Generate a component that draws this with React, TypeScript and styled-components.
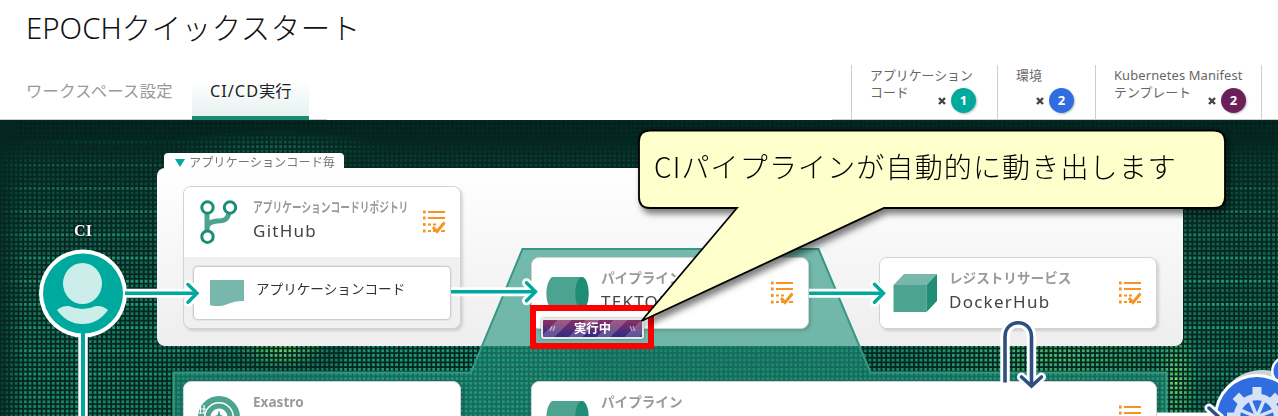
import React from 'react';
import styled, { createGlobalStyle } from 'styled-components';

const Global = createGlobalStyle`
  * { box-sizing: border-box; }
  body {
    margin: 0;
    width: 1278px;
    height: 416px;
    overflow: hidden;
    background: #fff;
    font-family: 'Noto Sans', 'Noto Sans CJK JP', sans-serif;
  }
`;

const Page = styled.div`
  width: 1278px;
  height: 416px;
  display: flex;
  flex-direction: column;
  overflow: hidden;
`;

const Title = styled.h1`
  margin: 0;
  padding: 7px 0 0 26px;
  height: 65px;
  font-size: 29.4px;
  line-height: 42px;
  font-weight: 300;
  color: #111;
  white-space: nowrap;
`;

const Bar = styled.div`
  height: 55px;
  display: flex;
  justify-content: space-between;
  background: linear-gradient(#ccc, #ccc) 0 54px / 327px 1px no-repeat,
    linear-gradient(#ccc, #ccc) 832px 54px / 446px 1px no-repeat;
`;

const Tabs = styled.nav`
  display: flex;
  padding: 16px 0 0 8px;
`;

const Tab = styled.div<{ $active?: boolean }>`
  height: 39px;
  width: ${(p) => (p.$active ? '117px' : '184px')};
  padding-left: 18px;
  line-height: 20px;
  font-size: 16.3px;
  white-space: nowrap;
  color: ${(p) => (p.$active ? '#222' : '#999')};
  border-bottom: ${(p) => (p.$active ? '4px solid #1b8a74' : '0')};
  background: ${(p) => (p.$active ? 'linear-gradient(#ffffff, #e6f2f0)' : 'none')};
`;

const Spread = styled.span<{ $s: number }>`
  letter-spacing: ${(p) => p.$s}px;
`;

const Counters = styled.div`
  display: flex;
  margin-right: 16px;
  border-right: 1px solid #ccc;
`;

const Counter = styled.div<{ $w: number; $pad: number }>`
  width: ${(p) => p.$w}px;
  padding: 2px ${(p) => p.$pad}px 0 18px;
  border-left: 1px solid #ccc;
  font-size: 12.9px;
  line-height: 17px;
  color: #666;
  white-space: nowrap;
`;

const CountRow = styled.div`
  display: flex;
  justify-content: flex-end;
  align-items: center;
  gap: 5px;
  height: 25px;
  margin-top: -13px;
`;

const Times = styled.svg`
  width: 8px;
  height: 8px;
`;

const Badge = styled.span<{ $c: string }>`
  width: 25px;
  height: 25px;
  border-radius: 50%;
  background: ${(p) => p.$c};
  box-shadow: 1px 1px 2px rgba(0, 0, 0, 0.25);
  color: #fff;
  font-size: 13px;
  font-weight: 700;
  line-height: 25px;
  text-align: center;
`;

const Canvas = styled.main`
  position: relative;
  flex: 1;
  overflow: hidden;
  background: #052822;
`;

const Layer = styled.svg`
  position: absolute;
  left: 0;
  top: 0;
`;

const GroupPanel = styled.section`
  position: absolute;
  left: 157px;
  top: 48px;
  width: 1026px;
  height: 178px;
  border-radius: 8px;
  background: linear-gradient(#fff, #f7f7f7 45%, #eee);
`;

const GroupLabel = styled.div`
  position: absolute;
  left: 164px;
  top: 33px;
  width: 180px;
  height: 20px;
  padding-left: 11px;
  display: flex;
  align-items: center;
  gap: 4px;
  border-radius: 4px 4px 0 0;
  background: #fff;
  color: #777;
  font-size: 12.2px;
  white-space: nowrap;
  line-height: 20px;
`;

const Card = styled.article<{ $x: number; $y: number; $w: number; $h: number }>`
  position: absolute;
  left: ${(p) => p.$x}px;
  top: ${(p) => p.$y}px;
  width: ${(p) => p.$w}px;
  height: ${(p) => p.$h}px;
  border: 1px solid #d2d2d2;
  border-radius: 8px;
  background: #f0f0f0;
  box-shadow: 2px 2px 3px rgba(0, 0, 0, 0.14);
  overflow: hidden;
`;

const CardHead = styled.header`
  height: 70px;
  padding: 0 14px 0 13px;
  display: flex;
  align-items: center;
  background: #fff;
`;

const IconBox = styled.div`
  width: 56px;
  height: 70px;
  flex: none;
`;

const CardText = styled.div`
  flex: 1;
  min-width: 0;
  height: 70px;
  padding-top: 9px;
  white-space: nowrap;
`;

const Kind = styled.div<{ $scale?: number }>`
  height: 22px;
  line-height: 22px;
  font-size: 13.6px;
  font-weight: 700;
  color: #9a9a9a;
  transform: scaleX(${(p) => p.$scale ?? 1});
  transform-origin: 0 0;
`;

const Name = styled.div`
  height: 24px;
  line-height: 25px;
  font-size: 17px;
  letter-spacing: 1.25px;
  color: #444;
`;

const CodeItem = styled.div`
  height: 54px;
  margin: 9px;
  padding-left: 16px;
  display: flex;
  align-items: center;
  gap: 12px;
  border: 1px solid #ccc;
  border-radius: 5px;
  background: #fff;
  box-shadow: 0 0 0 1px #e4e4e4;
  color: #333;
  font-size: 13.6px;
  line-height: 20px;
  white-space: nowrap;
`;

const CodeName = styled.span`
  padding-bottom: 8px;
`;

const UserLabel = styled.div`
  position: absolute;
  left: 53px;
  top: 101px;
  width: 60px;
  text-align: center;
  font: 700 16px/20px 'Liberation Serif', serif;
  color: #fff;
  text-shadow: 0 0 2px #000, 0 0 2px #000;
`;

const RunMark = styled.div`
  position: absolute;
  left: 530px;
  top: 185px;
  width: 124px;
  height: 44px;
  border: 6px solid #f00;
  padding: 7px 0 0 5px;
`;

const RunBadge = styled.div`
  width: 103px;
  height: 21px;
  border: 2px solid #e8e8e8;
  border-radius: 3px;
  box-shadow: 0 0 2px rgba(0, 0, 0, 0.5);
  background: repeating-linear-gradient(135deg, transparent 0 10px, rgba(255, 255, 255, 0.2) 10px 20px),
    linear-gradient(#8a2f63, #302a86);
  display: flex;
  align-items: center;
  justify-content: space-between;
  padding: 0 5px;
  color: #fff;
  font-size: 12.3px;
  font-weight: 700;
  line-height: 17px;
`;

const Tick = styled.svg`
  width: 9px;
  height: 5px;
  opacity: 0.55;
`;

const CalloutText = styled.p`
  position: absolute;
  left: 654px;
  top: 26px;
  margin: 0;
  font-size: 28px;
  line-height: 40px;
  font-weight: 300;
  letter-spacing: 1.15px;
  color: #000;
  white-space: nowrap;
  font-family: 'Noto Sans CJK JP', sans-serif;
`;

const ChecklistIcon = () => (
  <svg width="24" height="26" viewBox="0 0 24 26" fill="none" stroke="#f7931e" strokeWidth="1.8">
    <path d="M6 3H23M6 9H23M6 15.5H9M11 15.5H14M6 22H9M11 22H13M19 22H23" />
    <path d="M1 3H3.6M1 9H3.6M1 15.5H3.6M1 22H3.6" strokeWidth="2.8" />
    <path d="M11 18L15 22.5L22.5 13.5" strokeWidth="3" />
  </svg>
);

const BranchIcon = () => (
  <svg width="56" height="70" viewBox="0 0 56 70" fill="none">
    <path d="M10 20V50M32.5 20C32.5 34 26 34 20 34C14 35 10 36 10 42" stroke="#4ba390" strokeWidth="5" />
    <g fill="#fff" stroke="#1f8c76" strokeWidth="3">
      <circle cx="10.5" cy="20.5" r="5.7" />
      <circle cx="33" cy="20.5" r="5.7" />
      <circle cx="10.5" cy="49.7" r="5.7" />
    </g>
  </svg>
);

const CylinderIcon = () => (
  <svg width="56" height="70" viewBox="0 0 56 70">
    <path d="M7 19H37.5V52H7C-0.5 46 -0.5 25 7 19Z" fill="#4ba390" />
    <ellipse cx="37" cy="35.5" rx="6.8" ry="16.5" fill="#1f8c76" />
  </svg>
);

const CubeIcon = () => (
  <svg width="56" height="70" viewBox="0 0 56 70">
    <path d="M0.5 27L11 16H44L33.5 27Z" fill="#78b8ac" />
    <path d="M0.5 27H33.5V54H0.5Z" fill="#4ba390" />
    <path d="M33.5 27L44 16V43L33.5 54Z" fill="#1f8c76" />
  </svg>
);

const ExastroIcon = () => (
  <svg width="56" height="70" viewBox="0 0 56 70" fill="none">
    <circle cx="22" cy="35" r="18" stroke="#4ba390" strokeWidth="6" />
    <circle cx="22" cy="35" r="11" stroke="#4ba390" strokeWidth="5" />
    <path d="M22 28L23.5 33L27.5 34.5L22 38L16.5 34.5L20.5 33Z" fill="#4ba390" />
    <path d="M0 27H9M3.5 23V32M7 23V32M0 31H9" stroke="#fff" strokeWidth="1.2" />
  </svg>
);

const DocIcon = () => (
  <svg width="34" height="28" viewBox="0 0 34 28">
    <path d="M0 1H34V22C22 21 16 28 5 27Q2 27 0 26Z" fill="#78b8ac" />
  </svg>
);

type HeadProps = { icon: React.ReactNode; kind: string; name?: string; scale?: number };

const Head = ({ icon, kind, name, scale }: HeadProps) => (
  <CardHead>
    <IconBox>{icon}</IconBox>
    <CardText>
      <Kind $scale={scale}>{kind}</Kind>
      {name && <Name>{name}</Name>}
    </CardText>
    {kind !== 'Exastro' && <ChecklistIcon />}
  </CardHead>
);

type CountProps = { w: number; pad: number; color: string; n: number; lines: [React.ReactNode, string] };

const CountItem = ({ w, pad, color, n, lines }: CountProps) => (
  <Counter $w={w} $pad={pad}>
    <div>{lines[0]}</div>
    <div>{lines[1] || '\u00a0'}</div>
    <CountRow>
      <Times viewBox="0 0 8 8">
        <path d="M1 1L7 7M7 1L1 7" stroke="#444" strokeWidth="2.4" />
      </Times>
      <Badge $c={color}>{n}</Badge>
    </CountRow>
  </Counter>
);

const Dots = () => (
  <Layer width="1278" height="296" viewBox="0 0 1278 296">
    <defs>
      <pattern id="cell" width="4.64" height="4.64" patternUnits="userSpaceOnUse" x="0.8" y="2.04">
        <rect width="2.8" height="2.8" fill="#fff" />
      </pattern>
      <pattern id="rows" width="4.64" height="23.2" patternUnits="userSpaceOnUse" x="0.8" y="20.6">
        <rect width="2.8" height="2.8" fill="#fff" />
      </pattern>
      <mask id="cells">
        <rect width="1278" height="296" fill="url(#cell)" />
      </mask>
      <mask id="lines">
        <rect width="1278" height="296" fill="url(#rows)" />
      </mask>
      <radialGradient id="glow">
        <stop offset="0" stopColor="#1f9f7c" />
        <stop offset="0.5" stopColor="#1f9f7c" stopOpacity="0.5" />
        <stop offset="1" stopColor="#1f9f7c" stopOpacity="0" />
      </radialGradient>
      <radialGradient id="lime">
        <stop offset="0" stopColor="#7ee068" />
        <stop offset="1" stopColor="#3fc85a" stopOpacity="0" />
      </radialGradient>
      <linearGradient id="fade" x2="0" y2="1">
        <stop offset="0" stopColor="#021d18" />
        <stop offset="0.07" stopColor="#04241e" />
        <stop offset="0.12" stopColor="#0a3a30" />
        <stop offset="0.4" stopColor="#15604e" />
        <stop offset="1" stopColor="#187860" />
      </linearGradient>
      <linearGradient id="edge">
        <stop offset="0" stopColor="#052822" stopOpacity="0.8" />
        <stop offset="1" stopColor="#052822" stopOpacity="0" />
      </linearGradient>
    </defs>
    <g mask="url(#cells)">
      <rect width="1278" height="296" fill="url(#fade)" />
      <ellipse cx="100" cy="270" rx="180" ry="150" fill="url(#glow)" opacity="0.5" />
      <ellipse cx="275" cy="26" rx="110" ry="16" fill="url(#glow)" opacity="0.5" />
      <ellipse cx="460" cy="250" rx="120" ry="50" fill="#21c795" opacity="0.35" />
      <ellipse cx="460" cy="250" rx="150" ry="60" fill="url(#glow)" />
      <ellipse cx="1000" cy="240" rx="300" ry="80" fill="url(#glow)" opacity="0.7" />
      <ellipse cx="282" cy="230" rx="46" ry="20" fill="url(#lime)" />
      <ellipse cx="1060" cy="236" rx="150" ry="34" fill="url(#lime)" opacity="0.6" />
      <ellipse cx="1176" cy="260" rx="24" ry="60" fill="url(#lime)" />
    </g>
    <g mask="url(#lines)">
      <ellipse cx="110" cy="180" rx="200" ry="190" fill="url(#glow)" />
      <ellipse cx="1230" cy="190" rx="130" ry="170" fill="url(#glow)" />
    </g>
    <rect width="24" height="296" fill="url(#edge)" />
  </Layer>
);

const Zones = () => (
  <Layer width="1278" height="296" viewBox="0 0 1278 296">
    <path
      d="M173.5 300V252.5H471L522.5 129H818.5L870.5 252.5H1166.5V300"
      fill="rgba(34,148,126,0.62)"
      stroke="#369783"
      strokeWidth="2"
    />
  </Layer>
);

const Connectors = () => (
  <Layer width="1278" height="296" viewBox="0 0 1278 296" fill="none">
    <path d="M125 173.3H192M451 171.8H532M809 173.3H880" stroke="#fff" strokeWidth="9" />
    <path
      d="M188.5 164.5L197 173.3L188.5 182.3M526.5 162.8L535.5 171.8L526.5 180.8M874.5 164.3L883.5 173.3L874.5 182.3"
      stroke="#fff"
      strokeWidth="9"
      strokeLinecap="round"
      strokeLinejoin="round"
    />
    <path d="M83 214V296" stroke="#fff" strokeWidth="9.5" />
    <circle cx="83" cy="173.5" r="44" fill="#fff" />
    <circle cx="83" cy="173.5" r="40" fill="#00a99d" />
    <ellipse cx="82.5" cy="163.5" rx="19.5" ry="20.5" fill="#cceeeb" />
    <path d="M57 190Q62 185.5 69 186Q82.5 192 96 186Q103 185.5 108 190Q98 204 82.5 204Q67 204 57 190Z" fill="#cceeeb" />
    <g stroke="#00a99d" strokeWidth="3.4">
      <path d="M125 173.3H196M451 171.8H534M809 173.3H882" />
      <path
        d="M188 164.5L197 173.3L188 182.3M526.5 162.8L535.5 171.8L526.5 180.8M874.5 164.3L883.5 173.3L874.5 182.3"
        strokeLinecap="round"
      />
      <path d="M83 206V296" strokeWidth="4" />
    </g>
    <path d="M1005 262.5V217C1005 198 1031.5 198 1031.5 217V264" stroke="#fff" strokeWidth="9.5" />
    <path d="M1021.5 257L1031.5 266L1041.5 257" stroke="#fff" strokeWidth="9" strokeLinecap="round" />
    <path d="M1005 262.5V217C1005 198 1031.5 198 1031.5 217V264" stroke="#2f4f80" strokeWidth="3.6" />
    <path d="M1021.5 257L1031.5 266L1041.5 257" stroke="#2f4f80" strokeWidth="3.6" strokeLinecap="round" />

    <circle cx="1262" cy="296" r="46" fill="#c9d6d1" />
    <circle cx="1286" cy="251" r="15" fill="#fff" />
    <circle cx="1286" cy="251" r="12.5" fill="#2f6de0" />
    <circle cx="1257" cy="297" r="43" fill="#fff" />
    <circle cx="1257" cy="297" r="40" fill="#2f6de0" />
    <g stroke="#d5e2f8" transform="translate(1257 297)">
      <circle r="20" strokeWidth="6.5" />
      {[0, 1, 2, 3, 4, 5, 6, 7].map((i) => (
        <path key={i} d="M0 -30V-22" strokeWidth="9" transform={`rotate(${i * 45})`} />
      ))}
      {[0, 1, 2, 3, 4, 5, 6, 7].map((i) => (
        <path key={i} d="M0 -20V0" strokeWidth="3.5" transform={`rotate(${i * 45 + 22.5})`} />
      ))}
    </g>
    <path d="M1157 297H1212" stroke="#fff" strokeWidth="9" />
    <path d="M1209 288L1220 298" stroke="#fff" strokeWidth="9" strokeLinecap="round" />
    <path d="M1209 288L1220 298" stroke="#2f4f80" strokeWidth="3.5" strokeLinecap="round" />
  </Layer>
);

const CalloutShape = () => (
  <Layer width="1278" height="296" viewBox="0 0 1278 296">
    <defs>
      <filter id="drop" x="-5%" y="-10%" width="115%" height="130%">
        <feDropShadow dx="3" dy="5" stdDeviation="3" floodOpacity="0.5" />
      </filter>
    </defs>
    <path
      d="M649 10.5H1214Q1225 10.5 1225 21.5V77Q1225 88 1214 88H884L641.5 201L737 88H650Q639 88 639 77V21.5Q639 10.5 650 10.5Z"
      fill="#ffffcc"
      stroke="#000"
      strokeWidth="1.8"
      filter="url(#drop)"
    />
  </Layer>
);

export default function App() {
  return (
    <Page>
      <Global />
      <Title>
        EPOCH<Spread $s={0.6}>クイックスタート</Spread>
      </Title>
      <Bar>
        <Tabs>
          <Tab>
            <Spread $s={0.3}>ワークスペース設定</Spread>
          </Tab>
          <Tab $active>
            <Spread $s={1}>CI/CD</Spread>実行
          </Tab>
        </Tabs>
        <Counters>
          <CountItem w={146} pad={21} color="#00a99d" n={1} lines={['アプリケーション', 'コード']} />
          <CountItem w={98} pad={21} color="#2f6de0" n={2} lines={['環境', '']} />
          <CountItem
            w={166}
            pad={15}
            color="#6b2058"
            n={2}
            lines={[
              <Spread key="k" $s={0.14}>
                Kubernetes Manifest
              </Spread>,
              'テンプレート',
            ]}
          />
        </Counters>
      </Bar>
      <Canvas>
        <Dots />
        <GroupPanel />
        <GroupLabel>
          <svg width="10" height="8" viewBox="0 0 10 8">
            <path d="M0 0H10L5 8Z" fill="#00a99d" />
          </svg>
          アプリケーションコード毎
        </GroupLabel>
        <Zones />
        <Card $x={183} $y={66} $w={278} $h={143}>
          <Head icon={<BranchIcon />} kind="アプリケーションコードリポジトリ" name="GitHub" scale={0.715} />
          <CodeItem>
            <DocIcon />
            <CodeName>アプリケーションコード</CodeName>
          </CodeItem>
        </Card>
        <Card $x={531} $y={137} $w={278} $h={72}>
          <Head icon={<CylinderIcon />} kind="パイプライン" name="TEKTON" />
        </Card>
        <Card $x={879} $y={137} $w={278} $h={72}>
          <Head icon={<CubeIcon />} kind="レジストリサービス" name="DockerHub" />
        </Card>
        <Card $x={183} $y={261} $w={278} $h={72}>
          <Head icon={<ExastroIcon />} kind="Exastro" />
        </Card>
        <Card $x={531} $y={261} $w={626} $h={72}>
          <Head icon={<CylinderIcon />} kind="パイプライン" />
        </Card>
        <Connectors />
        <UserLabel>CI</UserLabel>
        <RunMark>
          <RunBadge>
            <Tick viewBox="0 0 9 7">
              <path d="M1 7L4 0M5 7L8 0" stroke="#fff" strokeWidth="1.8" />
            </Tick>
            <span>実行中</span>
            <Tick viewBox="0 0 9 7">
              <path d="M1 0L4 7M5 0L8 7" stroke="#fff" strokeWidth="1.8" />
            </Tick>
          </RunBadge>
        </RunMark>
        <CalloutShape />
        <CalloutText>CIパイプラインが自動的に動き出します</CalloutText>
      </Canvas>
    </Page>
  );
}
